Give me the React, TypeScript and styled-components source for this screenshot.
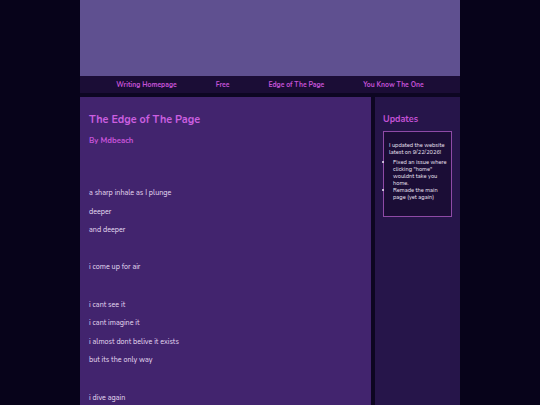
import styled, { createGlobalStyle } from 'styled-components';

const GlobalStyle = createGlobalStyle`
  html, body {
    margin: 0;
    padding: 0;
    background: #07031a;
    font-family: "Nunito", Lato, "Noto Sans", sans-serif;
  }
`;

const links = ['Writing Homepage', 'Free', 'Edge of The Page', 'You Know The One'];

const poem = [
  'a sharp inhale as I plunge',
  'deeper',
  'and deeper',
  '',
  'i come up for air',
  '',
  'i cant see it',
  'i cant imagine it',
  'i almost dont belive it exists',
  'but its the only way',
  '',
  'i dive again',
];

export default function App() {
  return (
    <>
      <GlobalStyle />
      <Page>
        <Header />
        <Nav>
          {links.map((l) => (
            <NavLink key={l} href="#">{l}</NavLink>
          ))}
        </Nav>
        <Body>
          <Main>
            <Title>The Edge of The Page</Title>
            <Byline>By Mdbeach</Byline>
            <Poem>
              {poem.map((line, i) => (
                <Line key={i}>{line || '\u00a0'}</Line>
              ))}
            </Poem>
          </Main>
          <Sidebar>
            <SideTitle>Updates</SideTitle>
            <UpdateBox>
              <UpdateText>I updated the website latest on 9/22/2026!</UpdateText>
              <UpdateList>
                <li>Fixed an issue where clicking "home" wouldnt take you home.</li>
                <li>Remade the main page (yet again)</li>
              </UpdateList>
            </UpdateBox>
          </Sidebar>
        </Body>
      </Page>
    </>
  );
}

const Page = styled.div`
  width: 380px;
  margin: 0 auto;
  background: #0d0622;
  min-height: 405px;
  display: flex;
  flex-direction: column;
`;

const Header = styled.div`
  height: 76px;
  background: #5f5090;
`;

const Nav = styled.nav`
  height: 17px;
  background: #1b0d36;
  display: flex;
  justify-content: center;
  align-items: center;
  gap: 39px;
  margin-bottom: 4px;
`;

const NavLink = styled.a`
  color: #c452d6;
  font-size: 6.8px;
  font-weight: 700;
  text-decoration: none;
`;

const Body = styled.div`
  flex: 1;
  display: flex;
  gap: 4px;
`;

const Main = styled.main`
  width: 291px;
  background: #42246e;
  padding: 15px 9px 0;
  box-sizing: border-box;
`;

const Title = styled.h1`
  margin: 0;
  color: #cb5fe0;
  font-size: 10.8px;
  font-weight: 700;
  line-height: 16px;
`;

const Byline = styled.h2`
  margin: 7px 0 0;
  color: #c452d6;
  font-size: 7.8px;
  font-weight: 700;
  line-height: 12px;
`;

const Poem = styled.div`
  margin-top: 42px;
`;

const Line = styled.p`
  margin: 0 0 9.6px;
  font-size: 7.2px;
  line-height: 9px;
  color: #e6dcf2;
`;

const Sidebar = styled.aside`
  flex: 1;
  background: #26154a;
  padding: 16px 8px 0 8px;
  box-sizing: border-box;
`;

const SideTitle = styled.h3`
  margin: 0 0 6px;
  color: #c452d6;
  font-size: 9px;
  font-weight: 700;
  line-height: 12px;
`;

const UpdateBox = styled.div`
  border: 1px solid #8e4aa6;
  background: #1b0d36;
  padding: 10px 2px 15px 5px;
  color: #ece4f4;
  font-size: 5.7px;
  line-height: 7px;
`;

const UpdateText = styled.p`
  margin: 0 0 3px;
`;

const UpdateList = styled.ul`
  margin: 0;
  padding-left: 4px;
`;
